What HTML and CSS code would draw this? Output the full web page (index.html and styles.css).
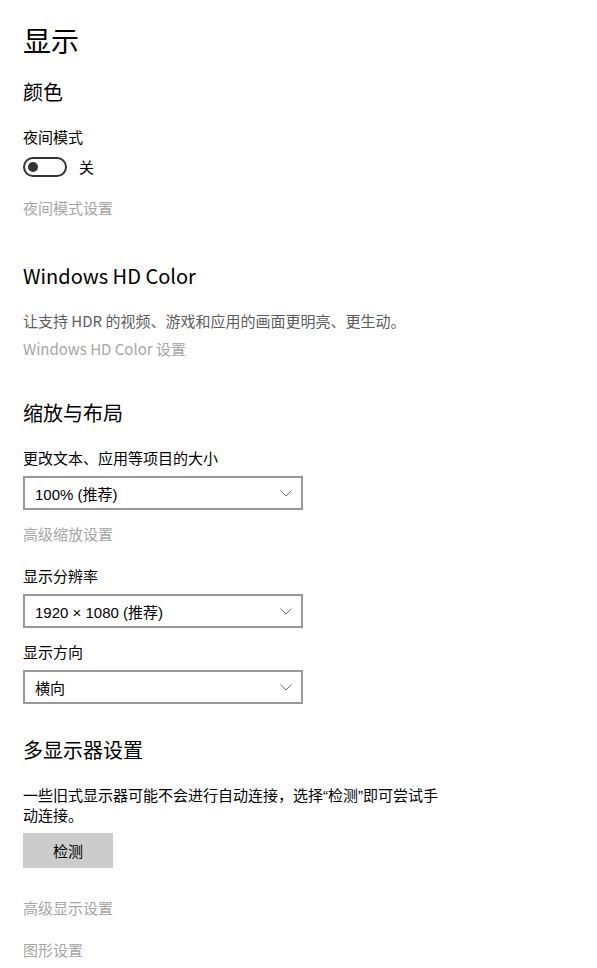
FILE: index.html
```html
<!DOCTYPE html>
<html>
<head>
	<meta charset="utf-8">
	<title>显示</title>
	<link rel="stylesheet" href="styles.css">
</head>
<body>
<div class="page">
	<h1 class="title">显示</h1>

	<h2 class="sec sec-color">颜色</h2>
	<p class="label l-night">夜间模式</p>
	<div class="toggle-row">
		<span class="toggle"><i></i></span>
		<span class="toggle-txt">关</span>
	</div>
	<a class="link l-nightset">夜间模式设置</a>

	<h2 class="sec sec-hd">Windows HD Color</h2>
	<p class="desc l-hddesc">让支持 HDR 的视频、游戏和应用的画面更明亮、更生动。</p>
	<a class="link l-hdset">Windows HD Color 设置</a>

	<h2 class="sec sec-scale">缩放与布局</h2>
	<p class="label l-size">更改文本、应用等项目的大小</p>
	<div class="select">
		<span>100% (推荐)</span>
		<svg width="12" height="7" viewBox="0 0 12 7"><path d="M0.5 0.5 L6 6 L11.5 0.5" fill="none" stroke="#6b6b6b" stroke-width="1"/></svg>
	</div>
	<a class="link l-adv">高级缩放设置</a>

	<p class="label l-res">显示分辨率</p>
	<div class="select">
		<span>1920 × 1080 (推荐)</span>
		<svg width="12" height="7" viewBox="0 0 12 7"><path d="M0.5 0.5 L6 6 L11.5 0.5" fill="none" stroke="#6b6b6b" stroke-width="1"/></svg>
	</div>

	<p class="label l-dir">显示方向</p>
	<div class="select">
		<span>横向</span>
		<svg width="12" height="7" viewBox="0 0 12 7"><path d="M0.5 0.5 L6 6 L11.5 0.5" fill="none" stroke="#6b6b6b" stroke-width="1"/></svg>
	</div>

	<h2 class="sec sec-multi">多显示器设置</h2>
	<p class="text l-multi">一些旧式显示器可能不会进行自动连接，选择“检测”即可尝试手动连接。</p>
	<button class="btn">检测</button>

	<a class="link l-advdisp">高级显示设置</a>
	<a class="link l-gfx">图形设置</a>
</div>
</body>
</html>
```

FILE: styles.css
```css
body{
	margin: 0;
	background: #fff;
	color: #000;
	font-family: "Noto Sans CJK SC", "Noto Sans", sans-serif;
}
.page{
	padding: 20px 0 0 23px;
}
h1, h2, p{
	margin: 0;
	font-weight: normal;
}
.title{
	font-size: 28px;
	line-height: 40px;
}
.sec{
	font-size: 20px;
	line-height: 28px;
}
.label, .desc, .link, .text{
	display: block;
	font-size: 15px;
	line-height: 20px;
}
.desc{
	color: #5d5d5d;
}
.link{
	color: #a6a6a6;
}
.text{
	width: 424px;
	font-family: "Liberation Sans", "Noto Sans CJK SC", sans-serif;
}
.select span{
	font-family: "Liberation Sans", "Noto Sans CJK SC", sans-serif;
}

/* vertical rhythm */
.sec-color{ margin-top: 18px; }
.l-night{ margin-top: 21px; }
.l-nightset{ margin-top: 21px; }
.sec-hd{ margin-top: 44px; }
.l-hddesc{ margin-top: 21px; }
.l-hdset{ margin-top: 8px; }
.sec-scale{ margin-top: 40px; }
.l-size{ margin-top: 21px; }
.l-adv{ margin-top: 14px; }
.l-res{ margin-top: 22px; }
.l-dir{ margin-top: 14px; }
.sec-multi{ margin-top: 32px; }
.l-multi{ margin-top: 22px; }
.l-advdisp{ margin-top: 30px; }
.l-gfx{ margin-top: 22px; }

.toggle-row{
	display: flex;
	align-items: center;
	gap: 12px;
	margin-top: 10px;
	height: 20px;
}
.toggle{
	box-sizing: border-box;
	width: 44px;
	height: 20px;
	border: 2px solid #333;
	border-radius: 10px;
	display: flex;
	align-items: center;
	padding-left: 3px;
}
.toggle i{
	width: 10px;
	height: 10px;
	border-radius: 50%;
	background: #333;
}
.toggle-txt{
	font-size: 15px;
	line-height: 20px;
}

.select{
	box-sizing: border-box;
	width: 280px;
	height: 34px;
	margin-top: 8px;
	border: 2px solid #999;
	display: flex;
	align-items: center;
	justify-content: space-between;
	padding: 0 9px 0 10px;
	font-size: 15px;
}

.btn{
	display: block;
	width: 90px;
	height: 35px;
	margin-top: 7px;
	border: none;
	background: #ccc;
	font-family: inherit;
	font-size: 15px;
	color: #000;
	padding: 0;
}
```
